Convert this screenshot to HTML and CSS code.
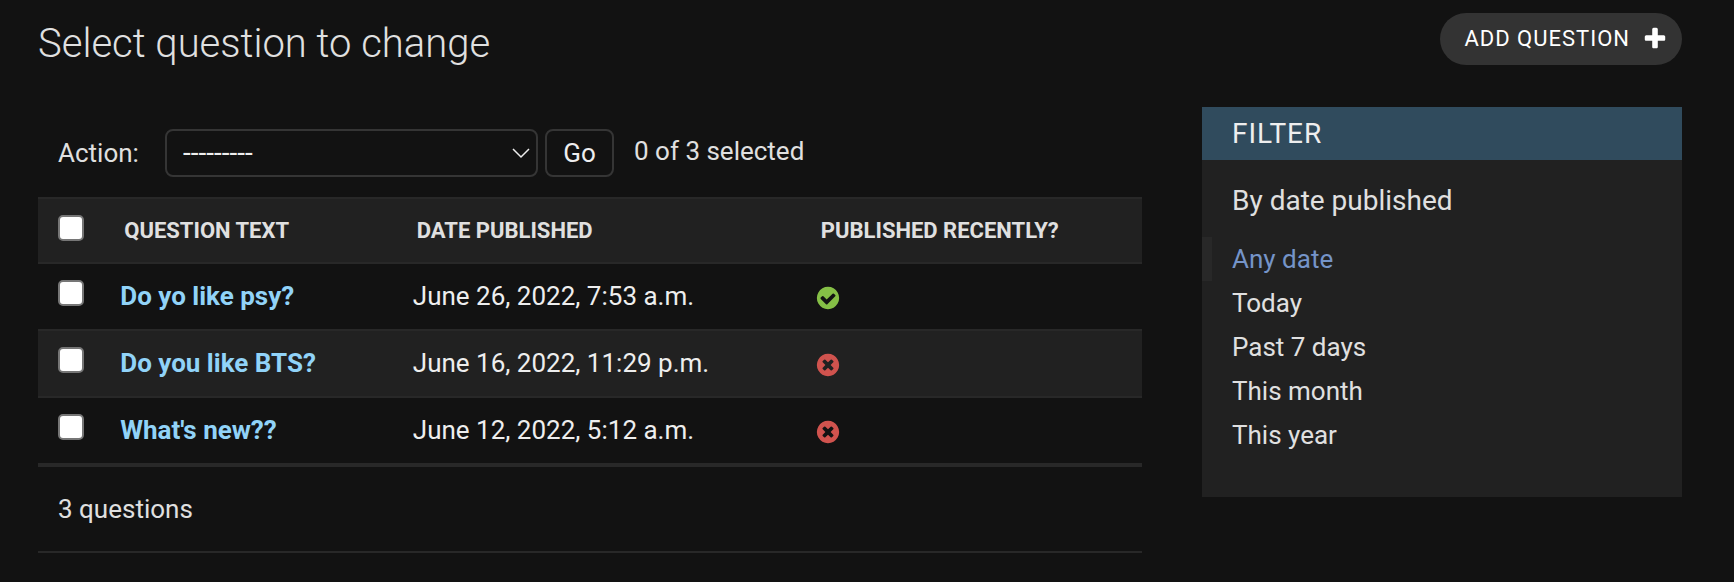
FILE: index.html
```html
<!DOCTYPE html>
<html lang="en">
<head>
<meta charset="utf-8">
<title>Select question to change</title>
<link rel="stylesheet" href="styles.css">
</head>
<body>
<svg class="sprite" aria-hidden="true">
  <symbol id="plus" viewBox="0 0 1792 1792"><path d="M1600 736v192q0 40-28 68t-68 28h-416v416q0 40-28 68t-68 28h-192q-40 0-68-28t-28-68v-416h-416q-40 0-68-28t-28-68v-192q0-40 28-68t68-28h416v-416q0-40 28-68t68-28h192q40 0 68 28t28 68v416h416q40 0 68 28t28 68z"/></symbol>
  <symbol id="yes" viewBox="0 0 1792 1792"><path d="M1412 734q0-28-18-46l-91-90q-19-19-45-19t-45 19l-408 407-226-226q-19-19-45-19t-45 19l-91 90q-18 18-18 46 0 27 18 45l362 362q19 19 45 19 27 0 46-19l543-543q18-18 18-45zm252 162q0 209-103 385.500t-279.500 279.500-385.500 103-385.500-103-279.500-279.500-103-385.500 103-385.500 279.500-279.500 385.500-103 385.500 103 279.500 279.500 103 385.500z"/></symbol>
  <symbol id="no" viewBox="0 0 1792 1792"><path d="M1277 1122q0-26-19-45l-181-181 181-181q19-19 19-45 0-27-19-46l-90-90q-19-19-46-19-26 0-45 19l-181 181-181-181q-19-19-45-19-27 0-46 19l-90 90q-19 19-19 46 0 26 19 45l181 181-181 181q-19 19-19 45 0 27 19 46l90 90q19 19 46 19 26 0 45-19l181-181 181 181q19 19 45 19 27 0 46-19l90-90q19-19 19-46zm387-226q0 209-103 385.500t-279.500 279.500-385.500 103-385.500-103-279.500-279.500-103-385.500 103-385.500 279.500-279.500 385.500-103 385.500 103 279.500 279.500 103 385.500z"/></symbol>
</svg>
<main class="content">
  <header class="page-header">
    <h1 class="title">Select question to change</h1>
    <a class="add-link" href="#add">Add question <svg class="icon" aria-hidden="true"><use href="#plus"/></svg></a>
  </header>
  <div class="changelist">
    <form class="results">
      <div class="actions">
        <label class="action-label" for="action">Action:</label>
        <div class="select-wrap">
          <select class="action-select" id="action"><option>---------</option></select>
          <svg class="chevron" viewBox="0 0 18 11" aria-hidden="true"><path d="M1 1l8 8 8-8"/></svg>
        </div>
        <button class="go" type="button">Go</button>
        <span class="counter">0 of 3 selected</span>
      </div>
      <table class="table">
        <colgroup><col class="col-check"><col class="col-text"><col class="col-date"><col></colgroup>
        <thead>
          <tr>
            <th scope="col" class="check"><input type="checkbox" class="box" aria-label="Select all questions"></th>
            <th scope="col">Question text</th>
            <th scope="col">Date published</th>
            <th scope="col">Published recently?</th>
          </tr>
        </thead>
        <tbody>
          <tr>
            <td class="check"><input type="checkbox" class="box" aria-label="Select Do yo like psy?"></td>
            <th scope="row"><a href="#q3">Do yo like psy?</a></th>
            <td>June 26, 2022, 7:53 a.m.</td>
            <td><svg class="icon yes" role="img" aria-label="True"><use href="#yes"/></svg></td>
          </tr>
          <tr>
            <td class="check"><input type="checkbox" class="box" aria-label="Select Do you like BTS?"></td>
            <th scope="row"><a href="#q2">Do you like BTS?</a></th>
            <td>June 16, 2022, 11:29 p.m.</td>
            <td><svg class="icon no" role="img" aria-label="False"><use href="#no"/></svg></td>
          </tr>
          <tr>
            <td class="check"><input type="checkbox" class="box" aria-label="Select What's new??"></td>
            <th scope="row"><a href="#q1">What's new??</a></th>
            <td>June 12, 2022, 5:12 a.m.</td>
            <td><svg class="icon no" role="img" aria-label="False"><use href="#no"/></svg></td>
          </tr>
        </tbody>
      </table>
      <p class="paginator">3 questions</p>
    </form>
    <nav class="filter" aria-labelledby="filter-title">
      <h2 class="filter-title" id="filter-title">Filter</h2>
      <h3 class="filter-by">By date published</h3>
      <ul class="filter-list">
        <li class="selected"><a href="#any">Any date</a></li>
        <li><a href="#today">Today</a></li>
        <li><a href="#week">Past 7 days</a></li>
        <li><a href="#month">This month</a></li>
        <li><a href="#year">This year</a></li>
      </ul>
    </nav>
  </div>
</main>
</body>
</html>
```
FILE: styles.css
```css
:root {
  --bg: #121212;
  --panel: #212121;
  --line: #282828;
  --border: #353535;
  --text: #e0e0e0;
  --bright: #eeeeee;
  --link: #91d3f8;
}

* { box-sizing: border-box; }

body {
  margin: 0;
  background: var(--bg);
  color: var(--text);
  font: 26px/32px Roboto, "Liberation Sans", sans-serif;
}

a { color: inherit; text-decoration: none; }

.sprite { display: none; }

.content { padding: 13px 52px 28px 38px; }

.page-header {
  display: flex;
  justify-content: space-between;
  align-items: flex-start;
  height: 94px;
}

.title {
  margin: 7px 0 0;
  font-size: 40px;
  font-weight: 300;
  line-height: 48px;
}

.add-link {
  display: flex;
  align-items: center;
  gap: 12px;
  padding: 0 14px 0 24px;
  height: 52px;
  border-radius: 26px;
  background: #333333;
  color: #ffffff;
  font-size: 22px;
  letter-spacing: 1px;
  text-transform: uppercase;
}

.icon {
  display: block;
  width: 26px;
  height: 26px;
  fill: currentColor;
}

.yes { color: #85bf46; }
.no { color: #d0534e; }

.changelist {
  display: flex;
  align-items: flex-start;
  gap: 60px;
}

.results { flex: 1; min-width: 0; }

.actions {
  display: flex;
  align-items: center;
  height: 90px;
  padding: 2px 20px 0;
}

.action-label { width: 107px; }

.select-wrap {
  position: relative;
  width: 373px;
  margin-right: 7px;
}

.action-select {
  display: block;
  appearance: none;
  width: 100%;
  height: 48px;
  padding: 0 16px;
  border: 2px solid var(--border);
  border-radius: 8px;
  background: var(--bg);
  color: var(--bright);
  font: inherit;
  font-size: 28px;
}

.chevron {
  position: absolute;
  top: 19px;
  right: 8px;
  width: 18px;
  height: 11px;
  fill: none;
  stroke: var(--bright);
  stroke-width: 1.500;
  pointer-events: none;
}

.go {
  width: 69px;
  height: 48px;
  margin-right: 20px;
  padding: 0;
  border: 2px solid var(--border);
  border-radius: 8px;
  background: var(--bg);
  color: var(--bright);
  font: inherit;
}

.counter { padding-bottom: 4px; }

.table {
  width: 100%;
  table-layout: fixed;
  border-collapse: separate;
  border-spacing: 0;
}

.col-check { width: 6%; }
.col-text { width: 26.5%; }
.col-date { width: 36.6%; }

.table th,
.table td {
  height: 67px;
  padding: 0 16px 2px;
  border-bottom: 2px solid var(--line);
  text-align: left;
  vertical-align: middle;
}

.table td { color: var(--bright); }

.table thead th {
  padding: 0 20px;
  border-top: 2px solid var(--line);
  background: var(--panel);
  font-size: 22px;
  font-weight: 700;
  text-transform: uppercase;
}

.table tbody th { color: var(--link); font-weight: 700; }

.table tbody tr:nth-child(even) > * { background: var(--panel); }

.table thead .check { padding: 0 0 6px 20px; }
.table tbody .check { padding: 0 0 8px 20px; }

.box {
  display: block;
  appearance: none;
  width: 26px;
  height: 26px;
  margin: 0;
  border: 2px solid #767676;
  border-radius: 5px;
  background: #ffffff;
}

.box:checked { background: #3b82f6; }

.table .icon { margin: 4px 0 0 -2px; }

.paginator {
  margin: 0;
  padding: 26px 20px;
  border-top: 2px solid var(--line);
  border-bottom: 2px solid var(--line);
}

.filter {
  flex: 0 0 480px;
  padding-bottom: 40px;
  background: var(--panel);
}

.filter-title {
  margin: 0 0 23px;
  padding: 10px 30px;
  background: #304b5d;
  color: var(--bright);
  font-size: 28px;
  font-weight: 400;
  line-height: 33px;
  letter-spacing: 1px;
  text-transform: uppercase;
}

.filter-by {
  margin: 0 0 18px;
  padding: 0 30px;
  font-size: 28px;
  font-weight: 400;
  line-height: 36px;
}

.filter-list {
  margin: 0;
  padding: 0;
  list-style: none;
}

.filter-list li {
  padding-left: 20px;
  border-left: 10px solid transparent;
  line-height: 44px;
}

.filter-list .selected {
  border-left-color: var(--line);
  color: #7594c8;
}
```
